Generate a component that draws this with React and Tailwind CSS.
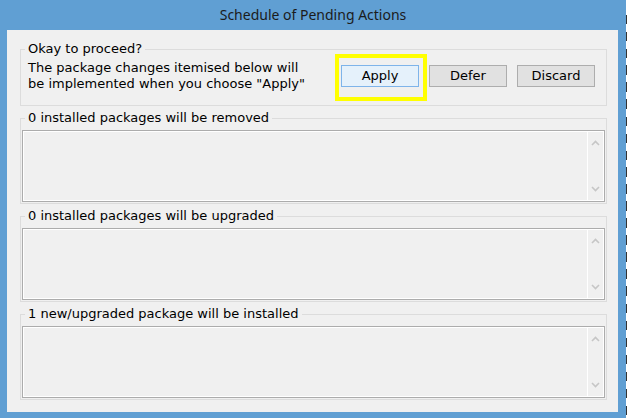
import React from "react";

const body = { fontFamily: '"DejaVu Sans", "Liberation Sans", sans-serif' };

function Chevron({ up }) {
  return (
    <svg width="9" height="6" viewBox="0 0 9 6" className="block">
      <polyline
        points={up ? "1,5 4.5,1.5 8,5" : "1,1 4.5,4.5 8,1"}
        fill="none"
        stroke="#c6c6c6"
        strokeWidth="1.6"
      />
    </svg>
  );
}

function ListBox() {
  return (
    <div className="mx-[1px] flex h-[72px] border border-[#acacac] bg-[#f0f0f0] shadow-[inset_0_0_0_1px_#ffffff]">
      <div className="flex-1" />
      <div className="my-[1px] mr-[1px] flex w-[16px] flex-col items-center justify-between border-l border-white pt-[8px] pb-[8px]">
        <Chevron up />
        <Chevron />
      </div>
    </div>
  );
}

function Group({ label, children, className = "" }) {
  return (
    <fieldset className={`w-[587px] border border-[#dcdcdc] ${className}`}>
      <legend className="ml-[4px] px-[3px] leading-[16px]">{label}</legend>
      {children}
    </fieldset>
  );
}

function Button({ children, primary }) {
  return (
    <button
      className={`h-[22px] w-[78px] border leading-[20px] ${
        primary ? "border-[#7eb4ea] bg-[#e5f1fb]" : "border-[#adadad] bg-[#e1e1e1]"
      }`}
    >
      {children}
    </button>
  );
}

// bits of the window behind the dialog, cut off at the screen edge
const behind = [9, 9, 9, 10, 10, 10, 9, 9, 9, 10, 10, 10, 10, 10, 10, 10, 10, 9, 9, 9, 9, 9, 9, 9];

export default function App() {
  return (
    <div className="flex h-[418px] w-[629px] overflow-hidden bg-white">
      <div className="flex w-[626px] shrink-0 flex-col bg-[#609fd3]">
        {/* Title bar */}
        <div
          className="flex h-[30px] items-center justify-center pb-[1px] text-[14px] text-[#1b1b1b]"
          style={{ fontFamily: '"Noto Sans", "Open Sans", sans-serif' }}
        >
          Schedule of Pending Actions
        </div>

        {/* Client area */}
        <div
          className="mb-[6px] ml-[7px] mr-[8px] flex-1 bg-[#f0f0f0] pl-[13px] pr-[11px] pt-[11px] text-[13px] text-black"
          style={body}
        >
          <Group label="Okay to proceed?">
            <div className="flex pl-[7px] pr-[11px] pt-[3px] pb-[13px]">
              <div className="leading-[16px]">
                <div>The package changes itemised below will</div>
                <div>be implemented when you choose "Apply"</div>
              </div>
              <div className="ml-auto mt-[5px] flex gap-[10px]">
                <div className="relative">
                  <Button primary>Apply</Button>
                  <span className="pointer-events-none absolute -bottom-[9px] -left-[6px] -right-[8px] -top-[11px] border-4 border-[#ffff00]" />
                </div>
                <Button>Defer</Button>
                <Button>Discard</Button>
              </div>
            </div>
          </Group>

          <Group label="0 installed packages will be removed" className="mt-[4px]">
            <div className="pt-[4px] pb-[1px]">
              <ListBox />
            </div>
          </Group>

          <Group label="0 installed packages will be upgraded" className="mt-[4px]">
            <div className="pt-[4px] pb-[1px]">
              <ListBox />
            </div>
          </Group>

          <Group label="1 new/upgraded package will be installed" className="mt-[4px]">
            <div className="pt-[4px] pb-[1px]">
              <ListBox />
            </div>
          </Group>
        </div>
      </div>

      {/* Edge of the window behind */}
      <div className="flex w-[3px] shrink-0 flex-col gap-[7px] pt-[14px]">
        {behind.map((h, i) => (
          <div key={i} className="flex h-[10px] items-end">
            <div className="w-[1px] bg-[#333]" style={{ height: h }} />
          </div>
        ))}
      </div>
    </div>
  );
}
